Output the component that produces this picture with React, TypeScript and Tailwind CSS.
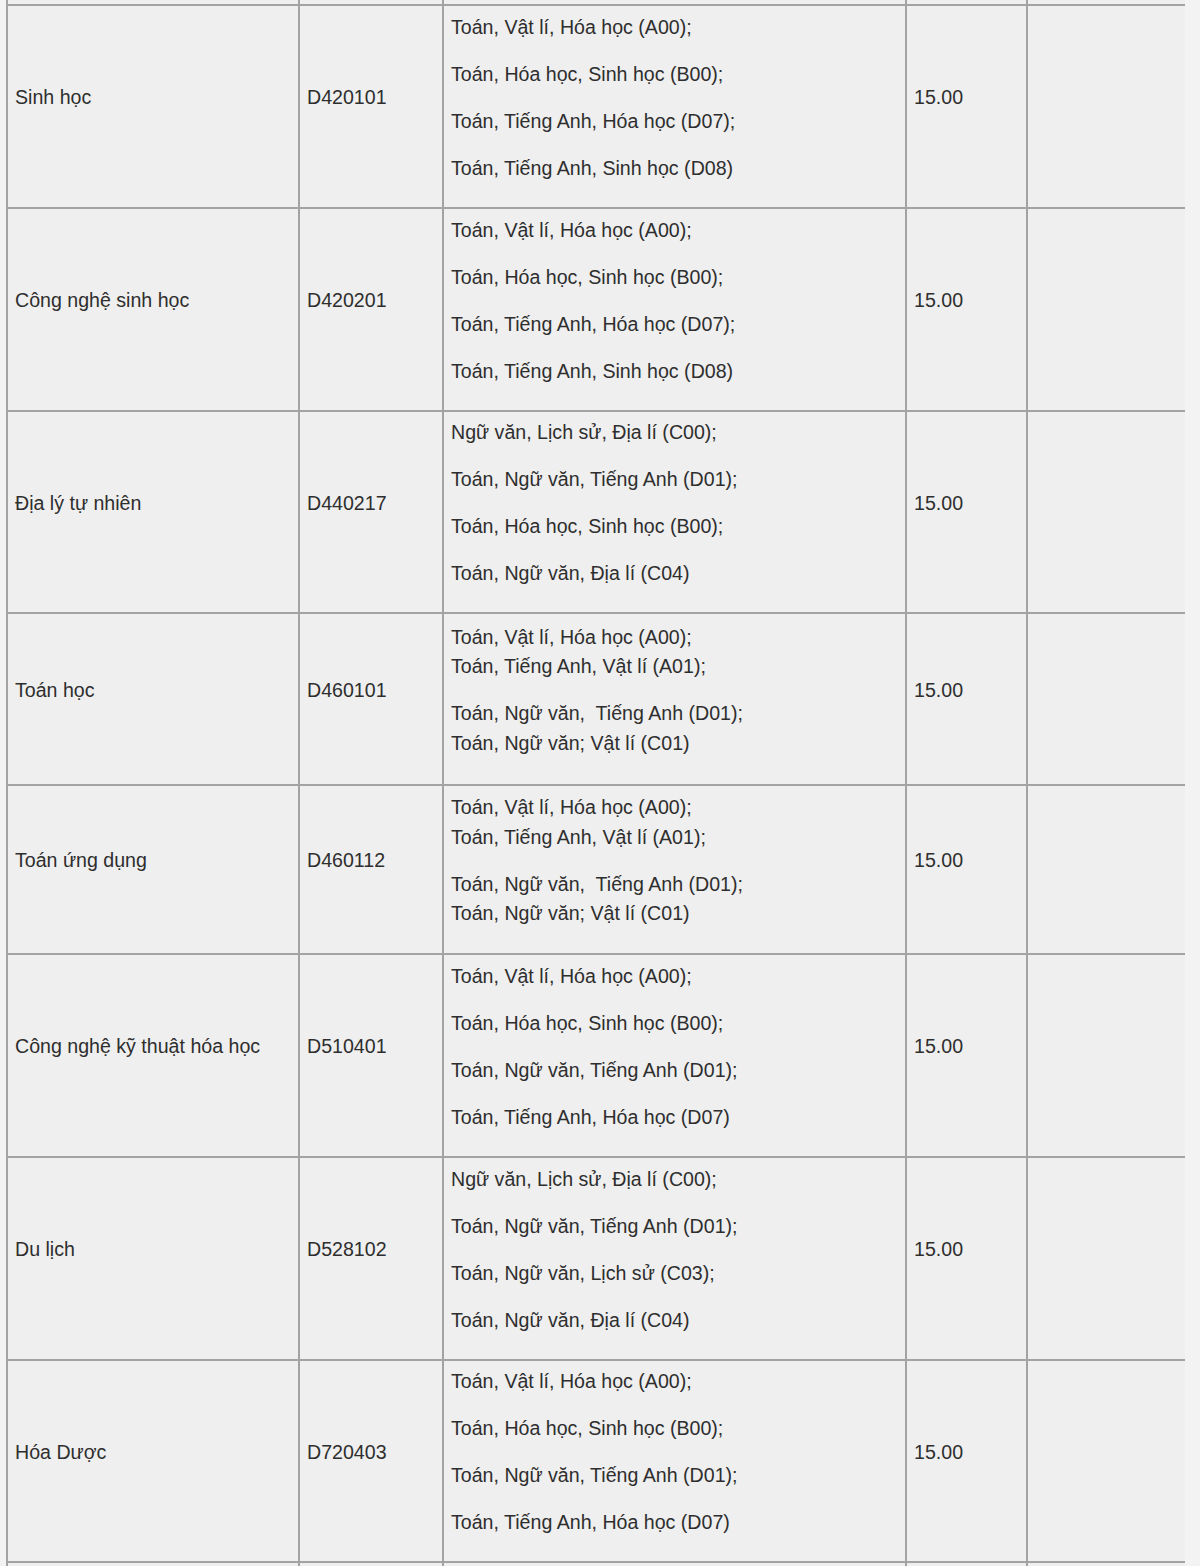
const A00 = "Toán, Vật lí, Hóa học (A00);";
const B00 = "Toán, Hóa học, Sinh học (B00);";
const D01 = "Toán, Ngữ văn, Tiếng Anh (D01);";
const C00 = "Ngữ văn, Lịch sử, Địa lí (C00);";

// each inner array is one paragraph, its items are lines split by <br>
const rows: { name: string; code: string; groups: string[][]; h: string }[] = [
  { name: "Sinh học", code: "D420101", h: "h-[203px]", groups: [[A00], [B00], ["Toán, Tiếng Anh, Hóa học (D07);"], ["Toán, Tiếng Anh, Sinh học (D08)"]] },
  { name: "Công nghệ sinh học", code: "D420201", h: "h-[203px]", groups: [[A00], [B00], ["Toán, Tiếng Anh, Hóa học (D07);"], ["Toán, Tiếng Anh, Sinh học (D08)"]] },
  { name: "Địa lý tự nhiên", code: "D440217", h: "h-[202px]", groups: [[C00], [D01], [B00], ["Toán, Ngữ văn, Địa lí (C04)"]] },
  { name: "Toán học", code: "D460101", h: "h-[172px]", groups: [[A00, "Toán, Tiếng Anh, Vật lí (A01);"], ["Toán, Ngữ văn,\u00a0 Tiếng Anh (D01);", "Toán, Ngữ văn; Vật lí (C01)"]] },
  { name: "Toán ứng dụng", code: "D460112", h: "h-[169px]", groups: [[A00, "Toán, Tiếng Anh, Vật lí (A01);"], ["Toán, Ngữ văn,\u00a0 Tiếng Anh (D01);", "Toán, Ngữ văn; Vật lí (C01)"]] },
  { name: "Công nghệ kỹ thuật hóa học", code: "D510401", h: "h-[203px]", groups: [[A00], [B00], [D01], ["Toán, Tiếng Anh, Hóa học (D07)"]] },
  { name: "Du lịch", code: "D528102", h: "h-[203px]", groups: [[C00], [D01], ["Toán, Ngữ văn, Lịch sử (C03);"], ["Toán, Ngữ văn, Địa lí (C04)"]] },
  { name: "Hóa Dược", code: "D720403", h: "h-[202px]", groups: [[A00], [B00], [D01], ["Toán, Tiếng Anh, Hóa học (D07)"]] },
];

const td = "border-2 border-[#a3a3a3] px-[7px] align-middle";

function Para({ lines }: { lines: string[] }) {
  return (
    <p className="mb-[17.5px] leading-[29.5px]">
      {lines.map((l, i) => (
        <span key={i}>
          {i > 0 && <br />}
          {l}
        </span>
      ))}
    </p>
  );
}

export default function App() {
  return (
    <div className="min-h-[1566px] w-[1200px] overflow-hidden bg-[#f3f3f3] pl-[6px] text-[19.6px] text-[#2e2e2e] font-['Liberation_Sans',Arial,sans-serif]">
      <table className="w-[1178px] table-fixed border-collapse bg-[#efefef]">
        <colgroup>
          <col className="w-[292px]" />
          <col className="w-[144px]" />
          <col className="w-[463px]" />
          <col className="w-[121px]" />
          <col className="w-[158px]" />
        </colgroup>
        <tbody>
          {/* tail of the row above, cut off by the screenshot */}
          <tr className="h-[5px]">
            <td className="border-2 border-t-0 border-[#a3a3a3]" />
            <td className="border-2 border-t-0 border-[#a3a3a3]" />
            <td className="border-2 border-t-0 border-[#a3a3a3]" />
            <td className="border-2 border-t-0 border-[#a3a3a3]" />
            <td className="border-2 border-t-0 border-r-0 border-[#a3a3a3]" />
          </tr>
          {rows.map((r) => (
            <tr key={r.code} className={r.h}>
              <td className={td}><Para lines={[r.name]} /></td>
              <td className={td}><Para lines={[r.code]} /></td>
              <td className={td}>
                {r.groups.map((g, i) => (
                  <Para key={i} lines={g} />
                ))}
              </td>
              <td className={td}><Para lines={["15.00"]} /></td>
              <td className={td + " border-r-0"} />
            </tr>
          ))}
          <tr className="h-[10px]">
            <td className="border-2 border-b-0 border-[#a3a3a3]" />
            <td className="border-2 border-b-0 border-[#a3a3a3]" />
            <td className="border-2 border-b-0 border-[#a3a3a3]" />
            <td className="border-2 border-b-0 border-[#a3a3a3]" />
            <td className="border-2 border-b-0 border-r-0 border-[#a3a3a3]" />
          </tr>
        </tbody>
      </table>
    </div>
  );
}
